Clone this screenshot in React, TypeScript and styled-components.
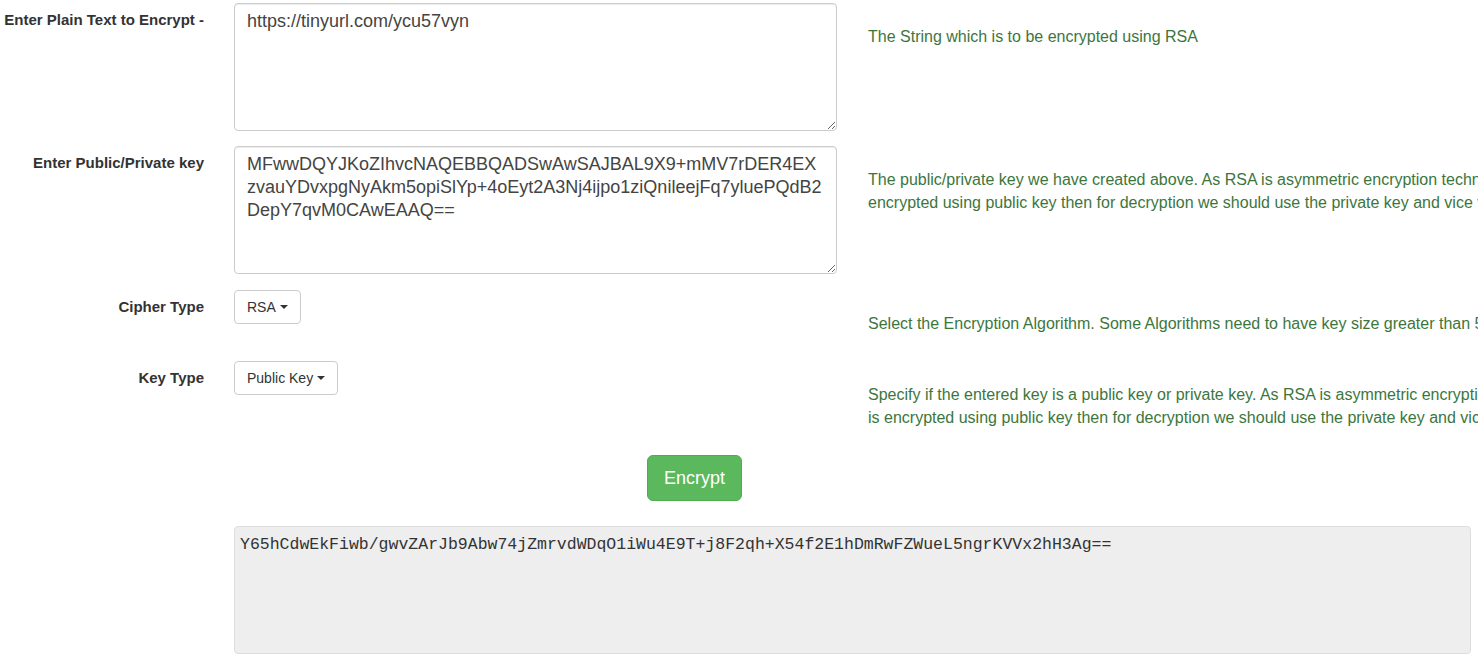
import React from "react";
import styled, { createGlobalStyle } from "styled-components";

const Global = createGlobalStyle`
  html, body {
    margin: 0;
    padding: 0;
    background: #fff;
    overflow: hidden;
  }
  body {
    width: 1478px;
    height: 660px;
    font-family: "Liberation Sans", Arial, sans-serif;
    font-size: 14px;
    color: #333;
  }
  * { box-sizing: border-box; }
`;

const Form = styled.form`
  display: flex;
  flex-direction: column;
  padding-top: 3px;
  width: 1478px;
`;

const Row = styled.div<{ $h: number }>`
  display: flex;
  align-items: flex-start;
  height: ${(p) => p.$h}px;
  flex-shrink: 0;
`;

const Label = styled.label`
  width: 219px;
  flex-shrink: 0;
  padding: 7px 15px 0 0;
  text-align: right;
  font-weight: bold;
  font-size: 15px;
  line-height: 20px;
  color: #333;
  white-space: nowrap;
`;

const Control = styled.div`
  width: 633px;
  flex-shrink: 0;
  padding: 0 15px;
`;

const TextArea = styled.textarea`
  display: block;
  width: 603px;
  height: 128px;
  padding: 6px 12px;
  border: 1px solid #ccc;
  border-radius: 4px;
  box-shadow: inset 0 1px 1px rgba(0, 0, 0, 0.075);
  font-family: "Liberation Sans", Arial, sans-serif;
  font-size: 18px;
  line-height: 23px;
  color: #444;
  background: #fff;
  resize: vertical;
  outline: none;
`;

const Help = styled.div`
  padding: 22px 0 0 16px;
  flex-shrink: 0;
  color: #3c763d;
  font-size: 16px;
  line-height: 23px;
`;

const HelpLine = styled.span`
  display: block;
  white-space: nowrap;
`;

const DropButton = styled.button`
  display: inline-flex;
  align-items: center;
  gap: 4px;
  height: 34px;
  padding: 6px 12px;
  border: 1px solid #ccc;
  border-radius: 4px;
  background: #fff;
  color: #333;
  font-family: "Liberation Sans", Arial, sans-serif;
  font-size: 14px;
  line-height: 20px;
  cursor: pointer;
`;

const Caret = styled.span`
  display: inline-block;
  width: 0;
  height: 0;
  border-top: 4px solid #333;
  border-left: 4px solid transparent;
  border-right: 4px solid transparent;
`;

const ButtonRow = styled.div`
  display: flex;
  justify-content: center;
  width: 1389px;
  height: 71px;
`;

const EncryptButton = styled.button`
  height: 46px;
  width: 95px;
  padding: 10px 16px;
  border: 1px solid #4cae4c;
  border-radius: 6px;
  background: #5cb85c;
  color: #fff;
  font-family: "Liberation Sans", Arial, sans-serif;
  font-size: 18px;
  line-height: 24px;
  cursor: pointer;
`;

const OutputRow = styled.div`
  display: flex;
  padding-left: 234px;
`;

const Output = styled.div`
  width: 1237px;
  height: 128px;
  padding: 8px 5px;
  background: #eee;
  border: 1px solid #ddd;
  border-radius: 4px;
  font-family: "Liberation Mono", "DejaVu Sans Mono", monospace;
  font-size: 16.5px;
  line-height: 20px;
  color: #333;
  word-break: break-all;
`;

export default function App() {
  return (
    <>
      <Global />
      <Form onSubmit={(e) => e.preventDefault()}>
        <Row $h={143}>
          <Label>Enter Plain Text to Encrypt -</Label>
          <Control>
            <TextArea defaultValue="https://tinyurl.com/ycu57vyn" />
          </Control>
          <Help>
            <HelpLine>The String which is to be encrypted using RSA</HelpLine>
          </Help>
        </Row>
        <Row $h={144}>
          <Label>Enter Public/Private key</Label>
          <Control>
            <TextArea defaultValue="MFwwDQYJKoZIhvcNAQEBBQADSwAwSAJBAL9X9+mMV7rDER4EXzvauYDvxpgNyAkm5opiSlYp+4oEyt2A3Nj4ijpo1ziQnileejFq7yluePQdB2DepY7qvM0CAwEAAQ==" />
          </Control>
          <Help>
            <HelpLine>The public/private key we have created above. As RSA is asymmetric encryption technique, if the text is</HelpLine>
            <HelpLine>encrypted using public key then for decryption we should use the private key and vice versa.</HelpLine>
          </Help>
        </Row>
        <Row $h={71}>
          <Label>Cipher Type</Label>
          <Control>
            <DropButton type="button">
              RSA <Caret />
            </DropButton>
          </Control>
          <Help>
            <HelpLine>Select the Encryption Algorithm. Some Algorithms need to have key size greater than 512 bits.</HelpLine>
          </Help>
        </Row>
        <Row $h={94}>
          <Label>Key Type</Label>
          <Control>
            <DropButton type="button">
              Public Key <Caret />
            </DropButton>
          </Control>
          <Help>
            <HelpLine>Specify if the entered key is a public key or private key. As RSA is asymmetric encryption technique, if the text</HelpLine>
            <HelpLine>is encrypted using public key then for decryption we should use the private key and vice versa.</HelpLine>
          </Help>
        </Row>
        <ButtonRow>
          <EncryptButton type="button">Encrypt</EncryptButton>
        </ButtonRow>
        <OutputRow>
          <Output>
            Y65hCdwEkFiwb/gwvZArJb9Abw74jZmrvdWDqO1iWu4E9T+j8F2qh+X54f2E1hDmRwFZWueL5ngrKVVx2hH3Ag==
          </Output>
        </OutputRow>
      </Form>
    </>
  );
}
